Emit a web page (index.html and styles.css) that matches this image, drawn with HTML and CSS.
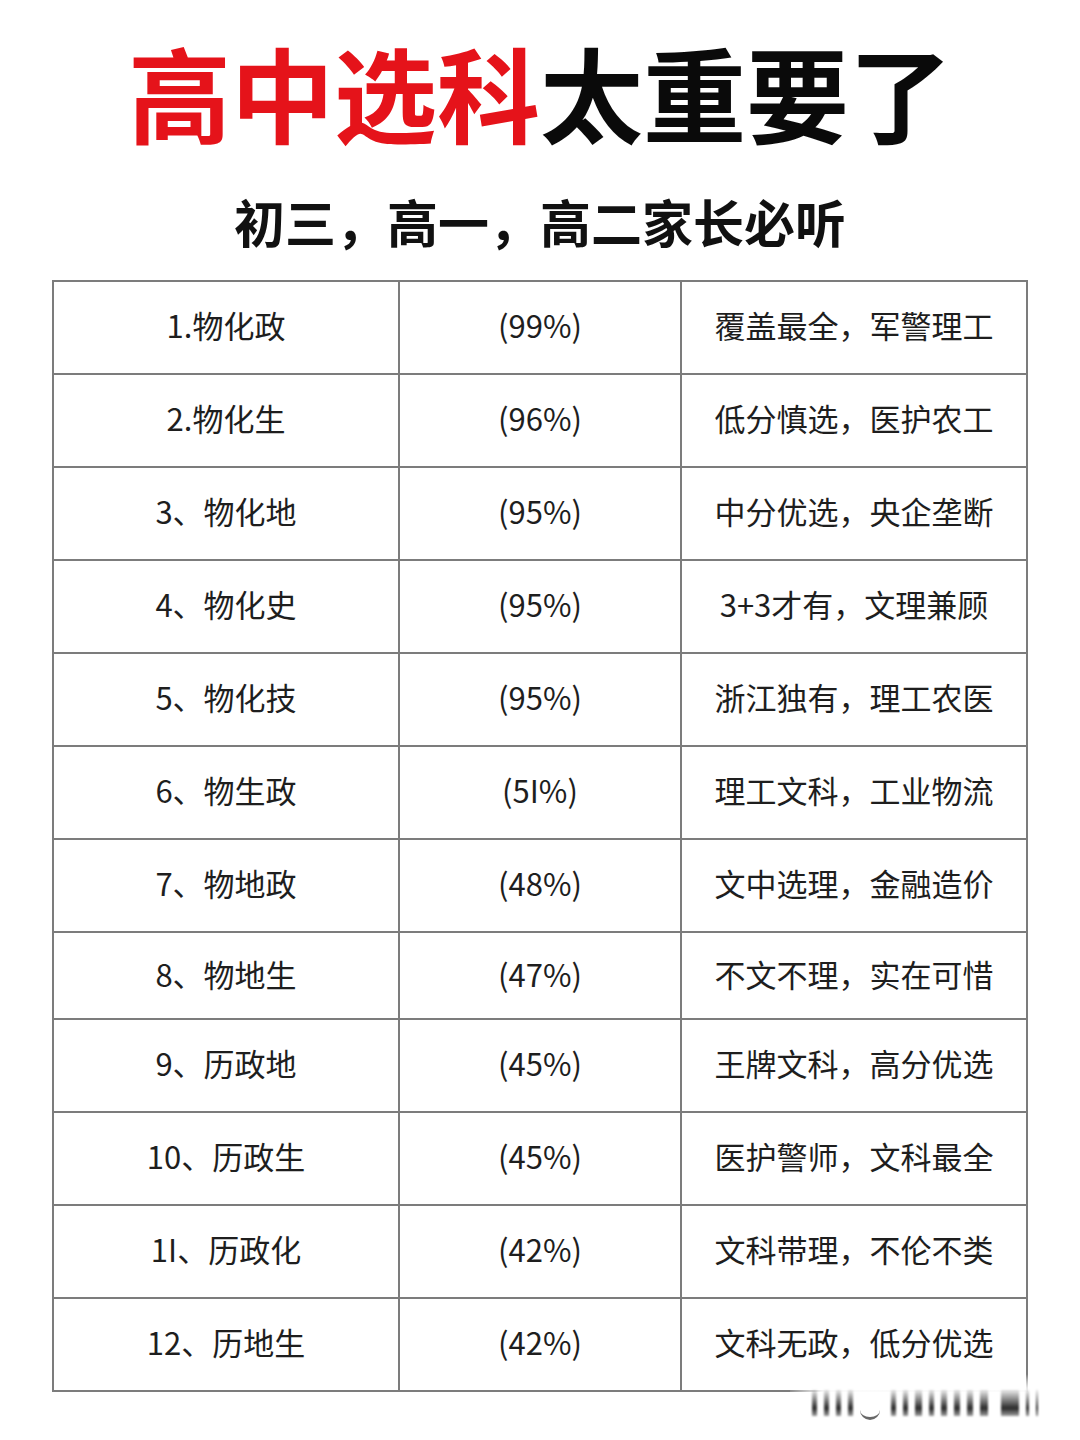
FILE: index.html
```html
<!DOCTYPE html>
<html lang="zh-CN">
<head>
<meta charset="utf-8">
<title>高中选科太重要了</title>
<link rel="stylesheet" href="styles.css">
</head>
<body>
<div class="page">
  <h1 class="title"><span class="red">高中选科</span><span class="black">太重要了</span></h1>
  <h2 class="subtitle">初三，高一，高二家长必听</h2>
  <div class="grid">
    <div class="cell">1.物化政</div><div class="cell">(99%)</div><div class="cell">覆盖最全，军警理工</div>
    <div class="cell">2.物化生</div><div class="cell">(96%)</div><div class="cell">低分慎选，医护农工</div>
    <div class="cell">3、物化地</div><div class="cell">(95%)</div><div class="cell">中分优选，央企垄断</div>
    <div class="cell">4、物化史</div><div class="cell">(95%)</div><div class="cell">3+3才有，文理兼顾</div>
    <div class="cell">5、物化技</div><div class="cell">(95%)</div><div class="cell">浙江独有，理工农医</div>
    <div class="cell">6、物生政</div><div class="cell">(5I%)</div><div class="cell">理工文科，工业物流</div>
    <div class="cell">7、物地政</div><div class="cell">(48%)</div><div class="cell">文中选理，金融造价</div>
    <div class="cell short">8、物地生</div><div class="cell short">(47%)</div><div class="cell short">不文不理，实在可惜</div>
    <div class="cell">9、历政地</div><div class="cell">(45%)</div><div class="cell">王牌文科，高分优选</div>
    <div class="cell">10、历政生</div><div class="cell">(45%)</div><div class="cell">医护警师，文科最全</div>
    <div class="cell">1I、历政化</div><div class="cell">(42%)</div><div class="cell">文科带理，不伦不类</div>
    <div class="cell">12、历地生</div><div class="cell">(42%)</div><div class="cell">文科无政，低分优选</div>
  </div>
  <div class="watermark">
    <span class="bar b1"></span><span class="bar b2"></span><span class="bar b3"></span><span class="bar b4"></span>
    <span class="ring"></span>
    <span class="bar b5"></span><span class="bar b6"></span><span class="bar b7"></span><span class="bar b8"></span>
    <span class="bar b9"></span><span class="bar b10"></span><span class="bar b11"></span><span class="bar b12"></span>
    <span class="bar b13"></span><span class="bar b14"></span><span class="bar b15"></span>
  </div>
</div>
</body>
</html>
```

FILE: styles.css
```css
html, body {
  margin: 0;
  padding: 0;
  background: #ffffff;
}

body {
  width: 1080px;
  height: 1440px;
  overflow: hidden;
  font-family: "Noto Sans CJK SC", "Noto Sans", sans-serif;
  color: #1c1c1c;
}

.page {
  position: relative;
  width: 1080px;
  height: 1440px;
  display: flex;
  flex-direction: column;
  align-items: center;
}

.title {
  margin: 40px 0 0 0;
  font-size: 103px;
  line-height: 104px;
  height: 104px;
  font-weight: 700;
  letter-spacing: 0;
  white-space: nowrap;
}

.red {
  color: #e5131a;
}

.black {
  color: #0a0a0a;
}

.subtitle {
  margin: 52px 0 0 0;
  font-size: 51px;
  line-height: 51px;
  height: 51px;
  font-weight: 700;
  color: #111111;
  white-space: nowrap;
}

.grid {
  margin-top: 33px;
  align-self: flex-start;
  margin-left: 52px;
  display: grid;
  grid-template-columns: 346px 282px 346px;
  border-left: 2px solid #7c7c7c;
  border-top: 2px solid #7c7c7c;
}

.cell {
  box-sizing: border-box;
  height: 93px;
  border-right: 2px solid #7c7c7c;
  border-bottom: 2px solid #7c7c7c;
  display: flex;
  align-items: center;
  justify-content: center;
  font-size: 31px;
  font-weight: 400;
  color: #1e1e1e;
  white-space: nowrap;
  padding-bottom: 7px;
}

.cell.short {
  height: 87px;
  padding-bottom: 4px;
}

.watermark {
  position: absolute;
  left: 790px;
  top: 1366px;
  width: 270px;
  height: 64px;
  display: flex;
  align-items: center;
  gap: 7px;
  padding-left: 22px;
  box-sizing: border-box;
  background: radial-gradient(ellipse at center, rgba(255,255,255,0.97) 55%, rgba(255,255,255,0) 75%);
}

.bar {
  display: block;
  width: 5px;
  height: 26px;
  background: linear-gradient(to bottom, rgba(60,60,60,0.1), #2a2a2a 70%, rgba(60,60,60,0.5));
  filter: blur(1px);
  margin-top: 10px;
}

.b5 { margin-left: 4px; }
.b7 { width: 7px; }
.b9, .b10, .b11 { width: 6px; }
.b12 { width: 8px; }
.b13 { width: 18px; margin-left: 6px; }
.b14 { width: 3px; }
.b15 { width: 2px; }

.ring {
  display: block;
  width: 20px;
  height: 14px;
  border-bottom: 3px solid rgba(40,40,40,0.7);
  border-radius: 0 0 12px 12px;
  margin-top: 26px;
  filter: blur(0.6px);
}
```
